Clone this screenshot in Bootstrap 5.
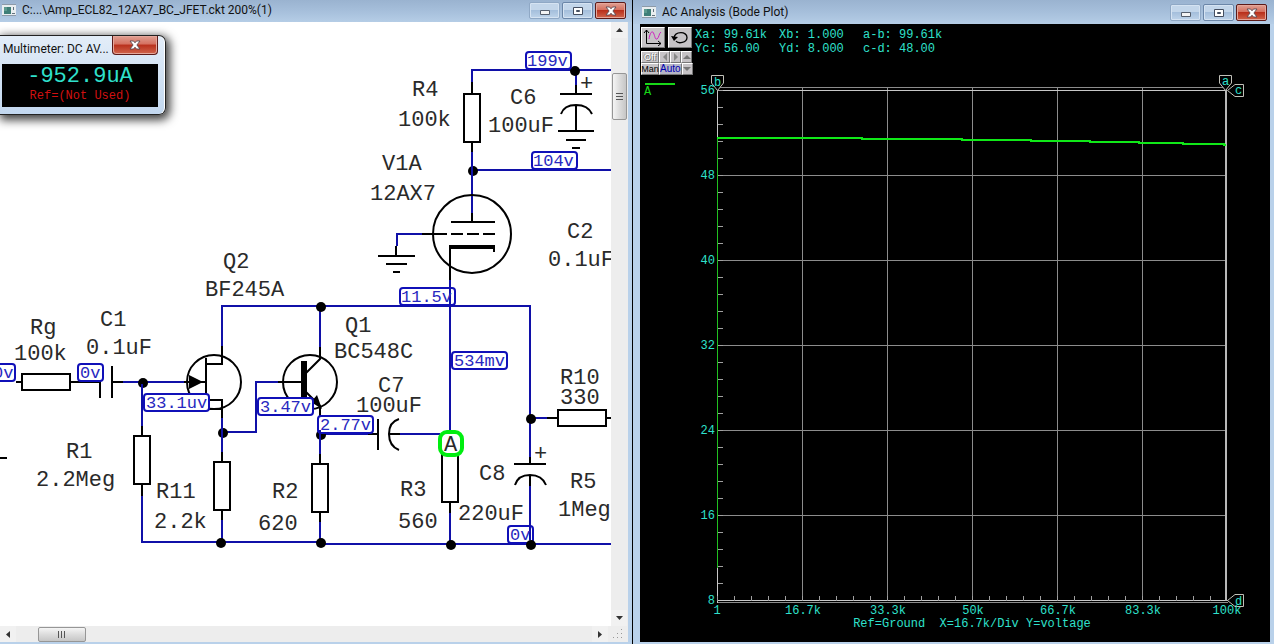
<!DOCTYPE html>
<html lang="en">
<head>
<meta charset="utf-8">
<meta name="viewport" content="width=device-width, initial-scale=1">
<title>Circuit simulator</title>
<link href="https://cdn.jsdelivr.net/npm/bootstrap@5.3.0/dist/css/bootstrap.min.css" rel="stylesheet">
<style>
  body { font-family: Roboto, "Open Sans", sans-serif; font-size: 12px; line-height: 16px; color: #111; background: #bad0e8; }
  .desk { display: grid; grid-template-columns: 633fr 641fr; height: 100vh; min-height: 400px; }
  .pane { min-width: 0; min-height: 0; background: #b9d1ea; }
  .pane-left { border-right: 1px solid #000; padding: 0 4px 2px 0; }
  .pane-right { padding: 0 4px 2px 7px; }
  .title-strip { background: linear-gradient(#9ab3d0, #a6bfdb 50%, #b5cde6); margin-right: -4px; }
  .pane-left .title-strip { height: 22px; padding: 2px 6px 0 2px; }
  .pane-right .title-strip { height: 24px; padding: 4px 7px 0 9px; margin-left: -7px; }
  .title-strip .app-icon { margin-top: 2px; }
  .title-strip .caption-text { margin-left: 6px; }
  .win-group { gap: 2px; }
  .caption-text { white-space: nowrap; }
  .win-btn { width: 31px; height: 17px; padding: 0; border: 1px solid #6b86a8; border-radius: 2px; background: linear-gradient(#c3d6ea 45%, #a5bfdc 50%, #bfd4ea); box-shadow: inset 0 0 0 1px #d5e3f2; display: flex; align-items: center; justify-content: center; }
  .win-min { border-color: #8fa8c5; }
  .win-btn svg { display: block; }
  .win-close { border-color: #5c1a18; background: linear-gradient(#e0a093 0, #d5705f 45%, #b9301c 50%, #d0654c); box-shadow: inset 0 0 0 1px #e5a79b; }
  .canvas-area { background: #fff; min-width: 0; min-height: 0; overflow: hidden; }
  .canvas-area svg { display: block; }
  .scroll-y { width: 17px; background: #ededed; }
  .scroll-x { height: 16px; background: #ededed; }
  .scroll-btn { border: 0; padding: 0; background: #f1f1f1; width: 16px; height: 16px; display: flex; align-items: center; justify-content: center; }
  .thumb { border: 1px solid #969696; border-radius: 2px; padding: 0; display: flex; align-items: center; justify-content: center; }
  .thumb-y { width: 15px; height: 47px; margin: 35px 0 0 1px; background: linear-gradient(90deg, #f5f5f5, #dcdcdc 50%, #c6c6c6); }
  .thumb-x { width: 48px; height: 15px; margin-left: 22px; background: linear-gradient(#f5f5f5, #dcdcdc 50%, #c6c6c6); }

  .meter { left: 0; top: 35px; width: 166px; padding: 0 7px 7px 2px; border: 1px solid #222; border-left: 0; border-radius: 0 7px 7px 0; background: linear-gradient(#e3edf8, #cfe0f3 60%, #c2d7ef); box-shadow: 2px 3px 10px 2px rgba(0,0,0,.75), inset -1px 0 0 #fff; }
  .meter-head { height: 28px; }
  .meter-head .caption-text { padding: 5px 0 0 1px; }
  .meter .win-close { width: 46px; height: 19px; border-top: 0; border-radius: 0 0 4px 4px; }
  .meter-face { background: #000; height: 43px; padding-top: 1px; font-family: "Liberation Mono", monospace; text-align: center; }
  .meter-value { color: #2fe0cc; font-size: 22px; line-height: 24px; }
  .meter-ref { color: #d01010; font-size: 12px; line-height: 14px; }

  .scope { background: #000; min-height: 0; color: #2fe0cc; font-family: "Liberation Mono", monospace; font-size: 12px; line-height: 14px; }
  .tool-strip { height: 51px; padding: 3px 0 0 1px; }
  .tools { width: 51px; }
  .tool-btn { padding: 0; border: 1px solid; border-color: #fff #777 #777 #fff; background: #c6c3c6; color: #000; font: 9px/10px "Liberation Sans", sans-serif; height: 12px; display: flex; align-items: center; justify-content: center; flex-shrink: 0; white-space: nowrap; }
  .tool-big { width: 24px; height: 21px; }
  .tool-big-row { margin-bottom: 3px; }
  .w-arrow { width: 11px; }
  .w-word { width: 18px; }
  .w-auto { width: 22px; background: #b5b5c6; color: #0000b0; font-size: 10px; }
  .is-off { color: #fff; text-shadow: 1px 1px 0 #707070, -1px 0 0 #888; }
  .readout { display: grid; grid-template-columns: 84px 84px auto; padding: 1px 0 0 3px; align-content: start; white-space: nowrap; }
  .plot { min-height: 0; }

  .wire { stroke: #1010a8; stroke-width: 2; fill: none; }
  .part { stroke: #000; stroke-width: 2; fill: none; }
  .body-fill { stroke: #000; stroke-width: 2; fill: #fff; }
  .tag { stroke: #1010b8; stroke-width: 2; fill: #fff; }
  .lbl { font: 22px "Liberation Mono", monospace; fill: #2a2a2a; }
  .volt { font: 17px "Liberation Mono", monospace; fill: #2828c0; }
  .axis { font: 12px "Liberation Mono", monospace; fill: #2fe0cc; }
  .grid-line { stroke: #8c8c8c; stroke-width: 1; fill: none; }
  .frame-line { stroke: #c8c8c8; stroke-width: 1; fill: none; }
</style>
</head>
<body>
<svg class="d-none" aria-hidden="true">
  <symbol id="i-app" viewBox="0 0 14 12"><path d="M0 0h14v12H0z" fill="#e9eef0"/><path d="M0 0h14v1H0zM0 11h14v1H0z" fill="#8d9aa8"/><path d="M2 3h7v7H2z" fill="#3f7f78"/><path d="M2 3h3v4H2z" fill="#5d9a8e"/><path d="M11 3h1v3h-1zM10 9h3v1h-3z" fill="#64727e"/></symbol>
  <symbol id="i-min" viewBox="0 0 12 10"><path d="M1.500 4.500h9v4h-9z" fill="#f4f4f4" stroke="#555e6c"/></symbol>
  <symbol id="i-max" viewBox="0 0 12 10"><path d="M1.500 1.500h9v7h-9z" fill="#fff" stroke="#444e60"/><path d="M4.500 4.500h3v1h-3z" fill="#a7bcd3" stroke="#444e60"/></symbol>
  <symbol id="i-close" viewBox="0 0 12 10"><path d="M1 1h3.500L6 2.800 7.500 1H11L7.900 5 11 9H7.500L6 7.200 4.500 9H1l3.100-4z" fill="#fff" stroke="#5a4a52" stroke-width=".9"/></symbol>
</svg>

<main class="desk">
  <section class="pane pane-left d-flex flex-column position-relative">
    <header class="title-strip d-flex align-items-start flex-shrink-0">
      <svg class="app-icon flex-shrink-0" width="14" height="12"><use href="#i-app"/></svg>
      <span class="caption-text flex-grow-1">C:...\Amp_ECL82_12AX7_BC_JFET.ckt 200%(1)</span>
      <div class="win-group d-flex">
        <button class="win-btn win-min" aria-label="Minimize"><svg width="12" height="10"><use href="#i-min"/></svg></button>
        <button class="win-btn" aria-label="Maximize"><svg width="12" height="10"><use href="#i-max"/></svg></button>
        <button class="win-btn win-close" aria-label="Close"><svg width="12" height="10"><use href="#i-close"/></svg></button>
      </div>
    </header>

    <div class="d-flex flex-grow-1" style="min-height:0">
      <div class="canvas-area flex-grow-1">
        <svg width="100%" height="100%" role="img" aria-label="Amplifier schematic">
          <g transform="translate(0 -22)">
            <!-- wires -->
            <path class="wire" d="M472 82V70H612M576 70V86M473 170H612M472 152V213M422 234H397V246M222 346V306H530V457M450 280V434M320 306V348M123 382H184M142 382V426M142 496V542H321M223 432H256V382H278M222 418V452M222 520V542M320 415V454M320 522V544H612M321 434H368M400 434H440M450 512V544M530 418H547M530 485V544"/>
            <!-- leads, plates and grounds -->
            <path class="part" d="M472 82V94M472 142V152M576 85V94M560 94H592M561 114Q564 105 576 105T592 114M576 105V131M558 131H594M566 140H586M572 148H580M472 213V222M451 222H495M422 234H447M451 234H463M467 234H479M483 234H495M450 280V246M494 246V252M396 246V256M378 256H415M386 264H407M393 272H400"/>
            <path d="M449 245H495V249H449z"/>
            <circle class="part" cx="472" cy="234" r="39"/>
            <path class="part" d="M16 382H22M70 382H100V398M112 366V398M112 382H123M142 426V436M142 484V496M222 452V462M222 510V520M320 454V464M320 512V522M0 458H7M368 434H378M378 419V450M399 419Q389 422 389 434T399 450M389 434H400M450 502V513M530 457V464M514 464H546M515 485Q518 475 530 475T546 485M530 475V486M547 418H557M607 418H612"/>
            <rect class="body-fill" x="464" y="94" width="16" height="48"/>
            <rect class="body-fill" x="22" y="374" width="48" height="16"/>
            <rect class="body-fill" x="134" y="436" width="16" height="48"/>
            <rect class="body-fill" x="214" y="462" width="16" height="48"/>
            <rect class="body-fill" x="312" y="464" width="16" height="48"/>
            <rect class="body-fill" x="442" y="454" width="16" height="48"/>
            <rect class="body-fill" x="558" y="410" width="48" height="16"/>
            <!-- JFET and NPN transistor -->
            <circle class="part" cx="214" cy="382" r="27"/>
            <path class="part" d="M184 382H206M206 358V406M206 364H222V346M206 400H222V418M206 409H222"/>
            <path d="M189 375L203 382L189 389z"/>
            <circle class="part" cx="310" cy="382" r="27"/>
            <path class="part" d="M278 382H302M306 373L320 359V347M306 392L320 406V416"/>
            <path d="M301 361H307V397H301zM311 402L317 395L322 409z"/>
            <!-- junctions -->
            <g><circle cx="575" cy="71" r="5"/><circle cx="473" cy="171" r="5"/><circle cx="321" cy="307" r="5"/><circle cx="143" cy="383" r="5"/><circle cx="223" cy="433" r="5"/><circle cx="321" cy="435" r="5"/><circle cx="531" cy="419" r="5"/><circle cx="221" cy="543" r="5"/><circle cx="321" cy="543" r="5"/><circle cx="451" cy="545" r="5"/></g>
            <!-- node voltages -->
            <g class="tag"><rect x="526" y="52" width="45" height="17" rx="3"/><rect x="532" y="152" width="45" height="17" rx="3"/><rect x="400" y="288" width="55" height="17" rx="3"/><rect x="452" y="352" width="55" height="17" rx="3"/><rect x="-30" y="364" width="45" height="17" rx="3"/><rect x="78" y="364" width="25" height="17" rx="3"/><rect x="144" y="394" width="65" height="17" rx="3"/><rect x="258" y="398" width="55" height="17" rx="3"/><rect x="318" y="416" width="55" height="17" rx="3"/><rect x="508" y="526" width="25" height="17" rx="3"/></g>
            <path class="wire" d="M450 286V306M530 524V540M472 160V182M142 384V396M320 430V446M222 428V442"/>
            <circle cx="531" cy="545" r="5"/>
            <g class="volt"><text x="527" y="66">199v</text><text x="533" y="166">104v</text><text x="401" y="302">11.5v</text><text x="454" y="366">534mv</text><text x="-7" y="378">0v</text><text x="80" y="378">0v</text><text x="146" y="408">33.1uv</text><text x="260" y="412">3.47v</text><text x="320" y="430">2.77v</text><text x="510" y="540">0v</text></g>
            <rect x="440" y="432" width="22" height="23" rx="7" fill="#fff" stroke="#00ee10" stroke-width="4"/>
            <!-- part names and values -->
            <g class="lbl"><text x="412" y="96">R4</text><text x="398" y="126">100k</text><text x="510" y="104">C6</text><text x="488" y="132">100uF</text><text x="580" y="90">+</text><text x="382" y="170">V1A</text><text x="370" y="200">12AX7</text><text x="567" y="238">C2</text><text x="548" y="266">0.1uF</text><text x="223" y="268">Q2</text><text x="205" y="296">BF245A</text><text x="345" y="332">Q1</text><text x="334" y="358">BC548C</text><text x="100" y="326">C1</text><text x="86" y="354">0.1uF</text><text x="30" y="334">Rg</text><text x="14" y="360">100k</text><text x="378" y="392">C7</text><text x="356" y="412">100uF</text><text x="560" y="384">R10</text><text x="560" y="404">330</text><text x="66" y="458">R1</text><text x="36" y="486">2.2Meg</text><text x="156" y="498">R11</text><text x="154" y="528">2.2k</text><text x="272" y="498">R2</text><text x="258" y="530">620</text><text x="400" y="496">R3</text><text x="398" y="528">560</text><text x="479" y="480">C8</text><text x="458" y="520">220uF</text><text x="534" y="460">+</text><text x="570" y="488">R5</text><text x="558" y="516">1Meg</text><text x="444" y="451">A</text></g>
          </g>
        </svg>
      </div>
      <div class="scroll-y d-flex flex-column flex-shrink-0">
        <button class="scroll-btn" aria-label="Scroll up"><svg width="7" height="4"><path d="M0 4L3.500 0L7 4z" fill="#333"/></svg></button>
        <button class="thumb thumb-y" aria-label="Vertical position"><svg width="7" height="8"><path d="M0 .5H7M0 3.500H7M0 6.500H7" stroke="#555"/></svg></button>
        <button class="scroll-btn mt-auto" aria-label="Scroll down"><svg width="7" height="4"><path d="M0 0H7L3.500 4z" fill="#333"/></svg></button>
      </div>
    </div>
    <div class="scroll-x d-flex align-items-center flex-shrink-0">
      <button class="scroll-btn" aria-label="Scroll left"><svg width="4" height="7"><path d="M4 0V7L0 3.500z" fill="#333"/></svg></button>
      <button class="thumb thumb-x" aria-label="Horizontal position"><svg width="8" height="7"><path d="M.5 0V7M3.500 0V7M6.500 0V7" stroke="#555"/></svg></button>
      <button class="scroll-btn ms-auto" aria-label="Scroll right"><svg width="4" height="7"><path d="M0 0V7L4 3.500z" fill="#333"/></svg></button>
      <svg class="ms-1 me-1" width="12" height="12"><path d="M9 1h1v1h-1zM9 5h1v1h-1zM9 9h1v1h-1zM5 5h1v1h-1zM5 9h1v1h-1zM1 9h1v1h-1z" fill="#999"/></svg>
    </div>

    <aside class="meter position-absolute">
      <div class="meter-head d-flex justify-content-between">
        <span class="caption-text">Multimeter: DC AV...</span>
        <button class="win-btn win-close flex-shrink-0" aria-label="Close multimeter"><svg width="12" height="10"><use href="#i-close"/></svg></button>
      </div>
      <div class="meter-face">
        <div class="meter-value">-952.9uA</div>
        <div class="meter-ref">Ref=(Not Used)</div>
      </div>
    </aside>
  </section>

  <section class="pane pane-right d-flex flex-column">
    <header class="title-strip d-flex align-items-start flex-shrink-0">
      <svg class="app-icon flex-shrink-0" width="14" height="12"><use href="#i-app"/></svg>
      <span class="caption-text flex-grow-1">AC Analysis (Bode Plot)</span>
      <div class="win-group d-flex">
        <button class="win-btn win-min" aria-label="Minimize"><svg width="12" height="10"><use href="#i-min"/></svg></button>
        <button class="win-btn" aria-label="Maximize"><svg width="12" height="10"><use href="#i-max"/></svg></button>
        <button class="win-btn win-close" aria-label="Close"><svg width="12" height="10"><use href="#i-close"/></svg></button>
      </div>
    </header>
    <div class="scope flex-grow-1 d-flex flex-column">
      <div class="tool-strip d-flex flex-shrink-0">
        <div class="tools">
          <div class="tool-big-row d-flex justify-content-between">
            <button class="tool-btn tool-big" aria-label="Scale"><svg width="20" height="17" fill="none"><path d="M3.500 1V14.500H18M1 4L3.500 1L6 4M15 12L18 14.500L15 17" stroke="#000"/><path d="M6 10C7 4 9 1 10.500 4S12 11 14 10S16 4 18 3" stroke="#d020c0"/></svg></button>
            <button class="tool-btn tool-big" aria-label="Undo"><svg width="20" height="17" fill="none"><path d="M4 9C5 2 17 2 17 8.500C17 14 8 15 6 12" stroke="#000" stroke-width="1.300"/><path d="M1 7L8 8L4 12z" fill="#000"/></svg></button>
          </div>
          <div class="d-flex">
            <button class="tool-btn w-word is-off">Off</button>
            <button class="tool-btn w-arrow" aria-label="Previous"><svg width="6" height="8"><path d="M5 0V8L1 4z" fill="#888"/></svg></button>
            <button class="tool-btn w-arrow" aria-label="Next"><svg width="6" height="8"><path d="M1 0V8L5 4z" fill="#888"/></svg></button>
            <button class="tool-btn w-arrow" aria-label="Up"><svg width="8" height="6"><path d="M0 5H8L4 1z" fill="#777"/></svg></button>
          </div>
          <div class="d-flex">
            <button class="tool-btn w-word">Man</button>
            <button class="tool-btn w-auto">Auto</button>
            <button class="tool-btn w-arrow" aria-label="Down"><svg width="8" height="6"><path d="M0 1H8L4 5z" fill="#777"/></svg></button>
          </div>
        </div>
        <div class="readout">
          <span>Xa: 99.61k</span><span>Xb: 1.000</span><span>a-b: 99.61k</span>
          <span>Yc: 56.00</span><span>Yd: 8.000</span><span>c-d: 48.00</span>
        </div>
      </div>
      <svg class="plot flex-grow-1 w-100" viewBox="640 75 630 566" preserveAspectRatio="xMidYMin meet" role="img" aria-label="Bode plot">
        <path d="M645 84H675" stroke="#18d818" stroke-width="2"/>
        <text class="axis" x="644" y="95" style="fill:#18d818">A</text>
        <!-- major grid -->
        <path class="grid-line" d="M802.500 88V601M887.500 88V601M972.500 88V601M1057.500 88V601M1142.500 88V601M717 175.500H1226M717 260.500H1226M717 345.500H1226M717 430.500H1226M717 515.500H1226M717 87.500H1226M717 602.500H1228"/>
        <path class="frame-line" d="M717.500 91V603M717 90.500H1226M717 600.500H1228"/>
        <path d="M1226 88V601" stroke="#b8b8b8" stroke-width="2"/>
        <!-- minor ticks: dash length 1, repeat 17 -->
        <path d="M720.500 90V600" stroke="#a0a0a0" stroke-width="5" stroke-dasharray="1 16"/>
        <path d="M717 598.500H1226" stroke="#a0a0a0" stroke-width="5" stroke-dasharray="1 16"/>
        <path d="M717.500 138V568" stroke="#20c020"/>
        <path d="M717 138H862V139H962V140H1031V141H1090V142H1139V143H1183V144H1224V145H1226" fill="none" stroke="#10e818" stroke-width="2"/>
        <!-- cursors -->
        <g fill="#000" stroke="#c0c0b8"><path d="M711.500 75.500H723.500V83L717.500 90.500L711.500 83z"/><path d="M1219.500 75.500H1231.500V83L1225.500 90.500L1219.500 83z"/><path d="M1243.500 84.500V96.500H1235L1227.500 90.500L1235 84.500z"/><path d="M1243.500 594.500V606.500H1235L1227.500 600.500L1235 594.500z"/></g>
        <g class="axis"><text x="714" y="86">b</text><text x="1222" y="85">a</text><text x="1235" y="94">c</text><text x="1235" y="605">d</text></g>
        <g class="axis" text-anchor="end"><text x="715" y="94">56</text><text x="715" y="179">48</text><text x="715" y="264">40</text><text x="715" y="349">32</text><text x="715" y="434">24</text><text x="715" y="519">16</text><text x="715" y="604">8</text></g>
        <g class="axis" text-anchor="middle"><text x="717" y="614">1</text><text x="803" y="614">16.7k</text><text x="888" y="614">33.3k</text><text x="973" y="614">50k</text><text x="1058" y="614">66.7k</text><text x="1143" y="614">83.3k</text><text x="1227" y="614">100k</text><text x="972" y="627">Ref=Ground&nbsp; X=16.7k/Div Y=voltage</text></g>
      </svg>
    </div>
  </section>
</main>
<script src="https://cdn.jsdelivr.net/npm/bootstrap@5.3.0/dist/js/bootstrap.bundle.min.js"></script>
</body>
</html>
